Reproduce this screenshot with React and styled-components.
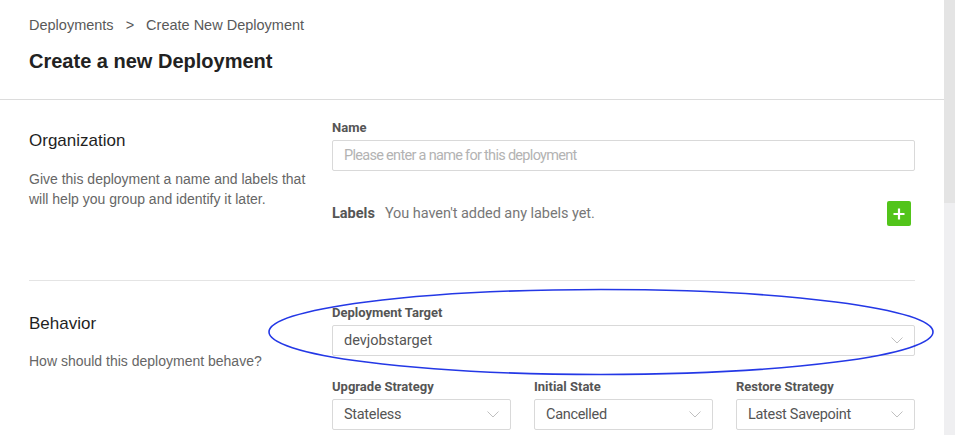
import React from 'react';
import styled, { createGlobalStyle } from 'styled-components';

const GlobalStyle = createGlobalStyle`
  html, body {
    margin: 0;
    padding: 0;
    background: #ffffff;
  }
  body {
    font-family: "Liberation Sans", Arial, sans-serif;
  }
`;

const Page = styled.div`
  position: relative;
  display: flex;
  width: 955px;
  height: 435px;
  overflow: hidden;
  background: #ffffff;
`;

const Main = styled.div`
  flex: 1;
  display: flex;
  flex-direction: column;
`;

const Scrollbar = styled.div`
  width: 11px;
  display: flex;
  flex-direction: column;
  background: #efeff1;
`;

const ScrollThumb = styled.div`
  height: 203px;
  background: #e4e4e4;
`;

const Header = styled.header`
  height: 100px;
  padding: 16px 29px 0;
  box-sizing: border-box;
  border-bottom: 1px solid #dcdcdc;
`;

const Breadcrumb = styled.nav`
  display: flex;
  gap: 12px;
  font-size: 14.5px;
  line-height: 18px;
  color: #595959;
`;

const Title = styled.h1`
  margin: 15px 0 0;
  font-size: 20px;
  line-height: 24px;
  font-weight: 700;
  color: #222222;
`;

const Body = styled.div`
  padding: 0 29px;
`;

const Section = styled.section`
  display: grid;
  grid-template-columns: 303px 1fr;
  padding: ${(p) => p.$pad};
  border-bottom: ${(p) => (p.$divider ? '1px solid #e4e4e4' : 'none')};
`;

const Intro = styled.div`
  padding-top: ${(p) => p.$top}px;
  padding-right: 24px;
`;

const SectionTitle = styled.h2`
  margin: 0;
  font-size: 17px;
  line-height: 24px;
  font-weight: 400;
  color: #1f1f1f;
`;

const Description = styled.p`
  margin: ${(p) => p.$gap}px 0 0;
  font-size: 14px;
  line-height: 20px;
  color: #666666;
`;

const Fields = styled.div`
  display: flex;
  flex-direction: column;
  font-family: Roboto, "Liberation Sans", sans-serif;
`;

const FieldLabel = styled.label`
  display: block;
  margin-bottom: 4px;
  font-size: 13px;
  line-height: 16px;
  font-weight: 700;
  color: #555555;
`;

const Input = styled.input`
  width: 100%;
  height: 31px;
  box-sizing: border-box;
  padding: 0 11px;
  border: 1px solid #d9d9d9;
  border-radius: 2px;
  font-family: Roboto, "Liberation Sans", sans-serif;
  font-size: 14.5px;
  letter-spacing: -0.3px;
  color: #555555;
  outline: none;
  &::placeholder {
    color: #b3b3b3;
    letter-spacing: -0.7px;
  }
`;

const LabelsRow = styled.div`
  display: flex;
  align-items: center;
  margin-top: 30px;
  height: 25px;
  padding-right: 4px;
`;

const LabelsTitle = styled.span`
  font-size: 14.5px;
  font-weight: 700;
  color: #555555;
  margin-right: 10px;
`;

const LabelsEmpty = styled.span`
  flex: 1;
  font-size: 14.5px;
  letter-spacing: -0.05px;
  color: #777777;
`;

const AddButton = styled.button`
  width: 24px;
  height: 25px;
  padding: 0;
  border: none;
  border-radius: 2px;
  background: #52c41a;
  display: flex;
  align-items: center;
  justify-content: center;
`;

const Row = styled.div`
  display: grid;
  grid-template-columns: repeat(3, 1fr);
  gap: 23px;
  margin-top: ${(p) => p.$top || 0}px;
`;

const SelectBox = styled.div`
  height: 31px;
  box-sizing: border-box;
  border: 1px solid #d9d9d9;
  border-radius: 2px;
  padding: 0 11px;
  display: flex;
  align-items: center;
  justify-content: space-between;
  font-size: 14.5px;
  letter-spacing: ${(p) => (p.$wide ? '0' : '-0.3px')};
  color: #555555;
`;

const Annotation = styled.svg`
  position: absolute;
  left: 267px;
  top: 288px;
  pointer-events: none;
`;

const Chevron = () => (
  <svg width="12" height="7" viewBox="0 0 12 7">
    <polyline points="0.5,0.5 6,6 11.5,0.5" fill="none" stroke="#c0c0c0" strokeWidth="1" />
  </svg>
);

const Plus = () => (
  <svg width="12" height="12" viewBox="0 0 12 12">
    <path d="M6 0.5v11M0.5 6h11" stroke="#ffffff" strokeWidth="2.2" />
  </svg>
);

const Select = ({ value, wide }) => (
  <SelectBox $wide={wide}>
    <span>{value}</span>
    <Chevron />
  </SelectBox>
);

const Field = ({ label, children }) => (
  <div>
    <FieldLabel>{label}</FieldLabel>
    {children}
  </div>
);

export default function App() {
  return (
    <>
      <GlobalStyle />
      <Page>
        <Main>
          <Header>
            <Breadcrumb>
              <span>Deployments</span>
              <span>&gt;</span>
              <span>Create New Deployment</span>
            </Breadcrumb>
            <Title>Create a new Deployment</Title>
          </Header>
          <Body>
            <Section $divider $pad="20px 0 54px">
              <Intro $top={9}>
                <SectionTitle>Organization</SectionTitle>
                <Description $gap={16}>
                  Give this deployment a name and labels that will help you group and identify it later.
                </Description>
              </Intro>
              <Fields>
                <Field label="Name">
                  <Input placeholder="Please enter a name for this deployment" />
                </Field>
                <LabelsRow>
                  <LabelsTitle>Labels</LabelsTitle>
                  <LabelsEmpty>You haven't added any labels yet.</LabelsEmpty>
                  <AddButton aria-label="Add label">
                    <Plus />
                  </AddButton>
                </LabelsRow>
              </Fields>
            </Section>
            <Section $pad="24px 0 0">
              <Intro $top={7}>
                <SectionTitle>Behavior</SectionTitle>
                <Description $gap={15}>How should this deployment behave?</Description>
              </Intro>
              <Fields>
                <Field label="Deployment Target">
                  <Select value="devjobstarget" wide />
                </Field>
                <Row $top={23}>
                  <Field label="Upgrade Strategy">
                    <Select value="Stateless" />
                  </Field>
                  <Field label="Initial State">
                    <Select value="Cancelled" />
                  </Field>
                  <Field label="Restore Strategy">
                    <Select value="Latest Savepoint" />
                  </Field>
                </Row>
              </Fields>
            </Section>
          </Body>
        </Main>
        <Scrollbar>
          <ScrollThumb />
        </Scrollbar>
        <Annotation width="670" height="92" viewBox="0 0 670 92">
          <ellipse cx="334" cy="44" rx="332" ry="42.5" fill="none" stroke="#2438e6" strokeWidth="1.6" />
        </Annotation>
      </Page>
    </>
  );
}
